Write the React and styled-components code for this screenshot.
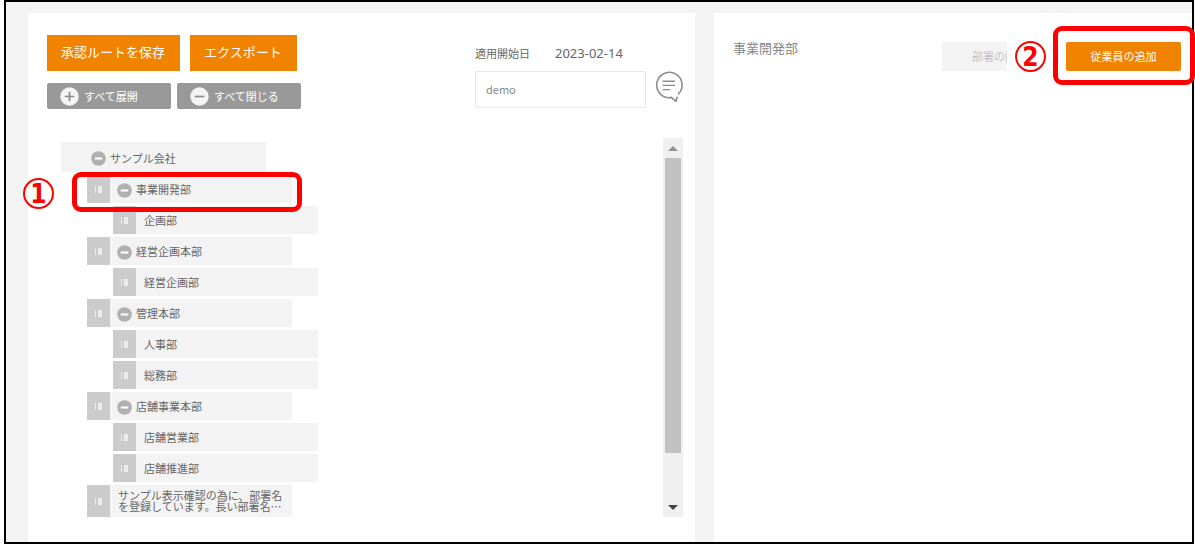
import React, { useState } from 'react';
import styled, { createGlobalStyle } from 'styled-components';

const departments = [
  { name: '事業開発部', level: 1, toggle: true, marked: true },
  { name: '企画部', level: 2 },
  { name: '経営企画本部', level: 1, toggle: true },
  { name: '経営企画部', level: 2 },
  { name: '管理本部', level: 1, toggle: true },
  { name: '人事部', level: 2 },
  { name: '総務部', level: 2 },
  { name: '店舗事業本部', level: 1, toggle: true },
  { name: '店舗営業部', level: 2 },
  { name: '店舗推進部', level: 2 },
  {
    name: 'サンプル表示確認の為に、部署名を登録しています。長い部署名…',
    level: 1,
    tall: true,
  },
];

const CircleIcon = ({ size, fill, stroke, plus }) => (
  <svg width={size} height={size} viewBox="0 0 20 20" aria-hidden="true">
    <circle cx="10" cy="10" r="9.7" fill={fill} />
    <path
      d={plus ? 'M5 10h10M10 5v10' : 'M5 10h10'}
      stroke={stroke}
      strokeWidth={size > 16 ? 1.8 : 2.8}
    />
  </svg>
);

const CommentIcon = () => (
  <svg width="28" height="32" viewBox="0 0 28 32" fill="none" stroke="#8c8c8c" strokeWidth="1.6" aria-hidden="true">
    <path
      d="M23.6 22.8A12.7 12.7 0 1 0 13.5 26.7L16.4 26.4L20.9 30.4L22.2 26.2"
      strokeLinejoin="round"
      strokeLinecap="round"
    />
    <path d="M7.6 10.2h12.4M7.6 14.4h12.4M7.6 18.6h7.6" strokeWidth="1.4" />
  </svg>
);

const App = () => {
  const [comment, setComment] = useState('demo');

  return (
    <>
      <GlobalStyle />
      <Page>
        <RoutePanel>
          <PanelHeader>
            <Actions>
              <ButtonRow $gap={10}>
                <PrimaryButton type="button">承認ルートを保存</PrimaryButton>
                <PrimaryButton type="button">エクスポート</PrimaryButton>
              </ButtonRow>
              <ButtonRow $gap={6}>
                <GreyButton type="button">
                  <CircleIcon size={19} fill="#f4f4f4" stroke="#8c8c8c" plus />
                  すべて展開
                </GreyButton>
                <GreyButton type="button">
                  <CircleIcon size={19} fill="#f4f4f4" stroke="#8c8c8c" />
                  すべて閉じる
                </GreyButton>
              </ButtonRow>
            </Actions>
            <Settings>
              <StartDate>
                <span>適用開始日</span>
                <DateValue>2023-02-14</DateValue>
              </StartDate>
              <CommentRow>
                <CommentInput
                  type="text"
                  name="comment"
                  aria-label="コメント"
                  value={comment}
                  onChange={(event) => setComment(event.target.value)}
                />
                <IconButton type="button" aria-label="コメント">
                  <CommentIcon />
                </IconButton>
              </CommentRow>
            </Settings>
          </PanelHeader>

          <TreeArea>
            <Tree>
              <RootRow>
                <Toggle type="button" aria-label="閉じる">
                  <CircleIcon size={15} fill="#b0b0b0" stroke="#fff" />
                </Toggle>
                サンプル会社
              </RootRow>
              {departments.map((item) => (
                <Row key={item.name} $level={item.level} $tall={item.tall}>
                  <Handle>
                    <svg width="7" height="7" viewBox="0 0 7 7" fill="#ececec" aria-hidden="true">
                      <path d="M0 0h1v7H0zM3 0h4v7H3z" />
                    </svg>
                  </Handle>
                  {item.toggle && (
                    <Toggle type="button" aria-label="閉じる">
                      <CircleIcon size={15} fill="#b0b0b0" stroke="#fff" />
                    </Toggle>
                  )}
                  <Name $indent={!item.toggle}>{item.name}</Name>
                  {item.marked && (
                    <RowMark>
                      <RowNumber>1</RowNumber>
                    </RowMark>
                  )}
                </Row>
              ))}
            </Tree>
            <Scrollbar>
              <ScrollArrow>
                <svg width="10" height="5" viewBox="0 0 10 5" aria-hidden="true">
                  <path d="M0 5L5 0L10 5z" fill="#8f8f8f" />
                </svg>
              </ScrollArrow>
              <ScrollTrack>
                <ScrollThumb />
              </ScrollTrack>
              <ScrollArrow>
                <svg width="10" height="5" viewBox="0 0 10 5" aria-hidden="true">
                  <path d="M0 0L5 5L10 0z" fill="#444" />
                </svg>
              </ScrollArrow>
            </Scrollbar>
          </TreeArea>
        </RoutePanel>

        <DetailPanel>
          <DetailTitle>事業開発部</DetailTitle>
          <DetailActions>
            <Clip>
              <SmallButton type="button" disabled>
                部署の削除
              </SmallButton>
            </Clip>
            <Number>2</Number>
            <MarkedButton>
              <SmallButton type="button">従業員の追加</SmallButton>
              <ButtonMark />
            </MarkedButton>
          </DetailActions>
        </DetailPanel>
      </Page>
    </>
  );
};

export default App;

const GlobalStyle = createGlobalStyle`
  * {
    box-sizing: border-box;
  }

  body {
    margin: 0;
    background-color: #fff;
    color: #666;
    font-family: 'Noto Sans CJK JP', sans-serif;
    font-size: 11px;
    line-height: 16px;
    overflow-x: hidden;
  }

  button,
  input {
    margin: 0;
    font-family: inherit;
  }

  svg {
    display: block;
    flex-shrink: 0;
  }
`;

const Page = styled.div`
  display: grid;
  grid-template-columns: 667fr 478fr;
  gap: 19px;
  min-height: 100vh;
  margin: 0 1px 0 4px;
  padding: 11px 0 0 22px;
  border: 2px solid #000;
  background-color: #f3f3f3;
`;

const RoutePanel = styled.section`
  padding: 22px 12px 25px 19px;
  background-color: #fff;
`;

const PanelHeader = styled.div`
  display: flex;
  justify-content: space-between;
  margin-bottom: 29px;
`;

const Actions = styled.div`
  display: flex;
  flex-direction: column;
  gap: 12px;
`;

const ButtonRow = styled.div`
  display: flex;
  gap: ${(props) => props.$gap}px;
`;

const PrimaryButton = styled.button`
  height: 36px;
  padding: 0 15px 3px 14px;
  border: none;
  font-size: 13px;
  color: #fff;
  background-color: #f08300;
  cursor: pointer;
`;

const GreyButton = styled.button`
  display: flex;
  align-items: center;
  gap: 5px;
  width: 124px;
  height: 26px;
  padding: 0 13px;
  border: none;
  border-radius: 2px;
  font-size: 11px;
  color: #fff;
  background-color: #999;
  cursor: pointer;
`;

const Settings = styled.div`
  width: 208px;
`;

const StartDate = styled.div`
  display: flex;
  align-items: center;
  gap: 25px;
  height: 36px;
`;

const DateValue = styled.span`
  font-family: 'Noto Sans', sans-serif;
  font-size: 13px;
`;

const CommentRow = styled.div`
  display: flex;
  align-items: flex-start;
  gap: 9px;
`;

const CommentInput = styled.input`
  flex: 1;
  min-width: 0;
  height: 37px;
  padding: 0 10px 2px;
  border: 1px solid #e6e6e6;
  border-radius: 2px;
  font-size: 11px;
  color: #888;
  outline: none;
`;

const IconButton = styled.button`
  padding: 0;
  border: none;
  background: none;
  cursor: pointer;
`;

const TreeArea = styled.div`
  display: flex;
  justify-content: space-between;
`;

const Tree = styled.div`
  display: flex;
  flex-direction: column;
  gap: 3px;
  padding: 4px 0 0 14px;
`;

const RootRow = styled.div`
  display: flex;
  align-items: center;
  gap: 4px;
  width: 205px;
  height: 30px;
  padding: 2px 0 0 30px;
  background-color: #f3f3f3;
`;

const Row = styled.div`
  position: relative;
  display: flex;
  align-items: center;
  width: 205px;
  height: ${(props) => (props.$tall ? 32 : 28)}px;
  margin-left: ${(props) => props.$level * 26}px;
  line-height: ${(props) => (props.$tall ? 11 : 16)}px;
  background-color: #f3f3f3;
`;

const Handle = styled.span`
  display: flex;
  flex-shrink: 0;
  align-items: center;
  align-self: stretch;
  justify-content: center;
  width: 23px;
  background-color: #cbcbcb;
`;

const Toggle = styled.button`
  padding: 0;
  border: none;
  background: none;
  cursor: pointer;

  ${Row} & {
    margin: 2px 4px 0 7px;
  }
`;

const Name = styled.span`
  padding-left: ${(props) => (props.$indent ? 8 : 0)}px;
`;

const Scrollbar = styled.div`
  display: flex;
  flex-direction: column;
  width: 20px;
  background-color: #f0f0f0;
`;

const ScrollArrow = styled.span`
  display: flex;
  align-items: center;
  justify-content: center;
  height: 20px;
`;

const ScrollTrack = styled.div`
  flex: 1;
  padding: 0 2px;
`;

const ScrollThumb = styled.div`
  height: 87%;
  background-color: #c1c1c1;
`;

const DetailPanel = styled.section`
  display: flex;
  align-items: flex-start;
  justify-content: space-between;
  padding: 28px 11px 28px 19px;
  background-color: #fff;
`;

const DetailTitle = styled.h2`
  margin: 0;
  font-size: 13px;
  line-height: 14px;
  font-weight: 400;
  color: #888;
`;

const DetailActions = styled.div`
  display: flex;
  align-items: center;
`;

const Clip = styled.div`
  width: 65px;
  margin-right: 8px;
  overflow: hidden;
`;

const SmallButton = styled.button`
  display: block;
  width: 115px;
  height: 29px;
  padding: 0 0 2px;
  border: none;
  border-radius: 2px;
  font-size: 11px;
  color: #fff;
  background-color: #f08300;
  cursor: pointer;

  &:disabled {
    color: #c4c4c4;
    background-color: #f3f3f3;
    cursor: default;
  }
`;

const MarkedButton = styled.div`
  position: relative;
  margin-left: 20px;
`;

const Mark = styled.div`
  position: absolute;
  z-index: 1;
  border: 5px solid #f00;
  border-radius: 9px;
  pointer-events: none;
`;

const RowMark = styled(Mark)`
  inset: -3px -10px -9px -15px;
`;

const ButtonMark = styled(Mark)`
  inset: -16px -14px -14px -13px;
`;

const Number = styled.span`
  display: flex;
  align-items: center;
  justify-content: center;
  width: 31px;
  height: 31px;
  border: 2px solid #f00;
  border-radius: 50%;
  font-family: 'DejaVu Sans Condensed', 'DejaVu Sans', sans-serif;
  font-size: 26px;
  line-height: 26px;
  font-weight: 700;
  color: #f00;
`;

const RowNumber = styled(Number)`
  position: absolute;
  top: 1px;
  left: -54px;
`;
